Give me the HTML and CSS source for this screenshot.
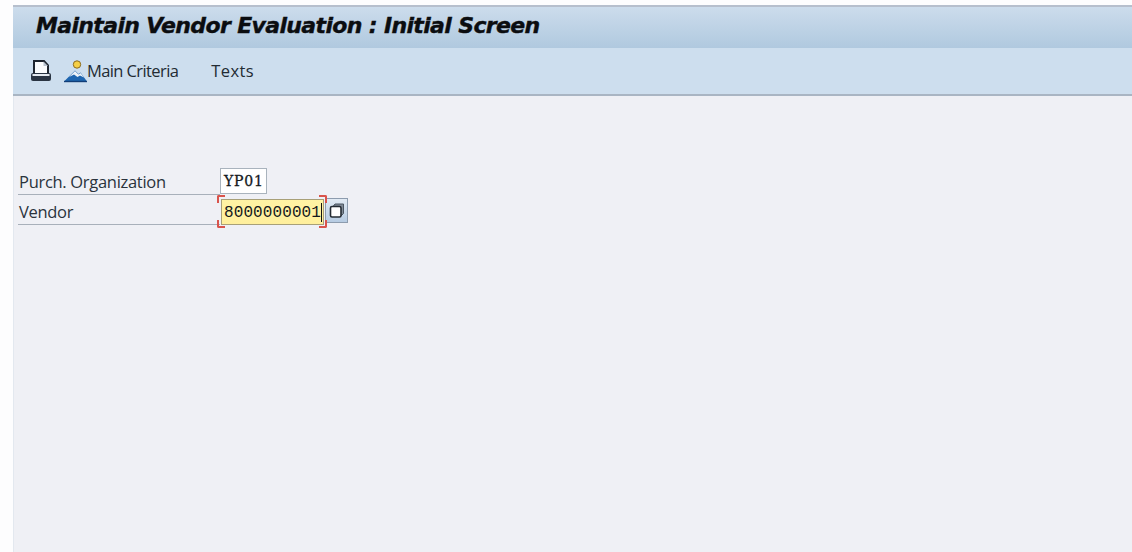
FILE: index.html
```html
<!DOCTYPE html>
<html lang="en">
<head>
<meta charset="utf-8">
<title>Maintain Vendor Evaluation : Initial Screen</title>
<link rel="stylesheet" href="styles.css">
</head>
<body>
<div class="window">
  <header class="titlebar"><h1 class="title">Maintain Vendor Evaluation : Initial Screen</h1></header>
  <nav class="toolbar">
    <svg class="icon-print" width="22" height="24" viewBox="0 0 22 24" aria-hidden="true">
      <path d="M4 14V2h10l4 4.500V14" fill="#fbfcfd" stroke="#1f2630" stroke-width="2"/>
      <path d="M13.500 2.500v4.500H18z" fill="#b9c4d0"/>
      <path d="M1 16a2 2 0 0 1 2-2h16a2 2 0 0 1 2 2v4a2 2 0 0 1-2 2H3a2 2 0 0 1-2-2z" fill="#2a3442"/>
      <path d="M2.500 15h17v2h-17z" fill="#e4e9ef"/>
    </svg>
    <button class="tool tool-main" type="button">
      <svg class="icon-mountain" width="24" height="24" viewBox="0 0 24 24" aria-hidden="true">
        <circle cx="14" cy="5.500" r="3.700" fill="#f5cf45" stroke="#8a6a20" stroke-width="1"/>
        <path d="M1 22.500 12 11.500l3.500 3.500 2-1.500 6.500 9z" fill="#1f66b0"/>
        <path d="M6 18 12 12l3.500 3.500 2-1.500 3.500 4.500-4-2-2.500 1.500-3.500-2.500z" fill="#eef3f8"/>
        <path d="M1 22.500h23" stroke="#123e78" stroke-width="1.400"/>
      </svg>
      <span class="tool-label">Main Criteria</span>
    </button>
    <button class="tool tool-texts" type="button"><span class="tool-label">Texts</span></button>
  </nav>
  <main class="content">
    <form class="form">
      <div class="row row-org">
        <label class="label">Purch. Organization</label>
        <span class="field field-plain">YP01</span>
      </div>
      <div class="row row-vendor">
        <label class="label">Vendor</label>
        <span class="field field-active">8000000001<i class="caret"></i>
          <i class="corner tl"></i><i class="corner tr"></i><i class="corner bl"></i><i class="corner br"></i>
        </span>
        <button class="search" type="button" aria-label="Multiple selection">
          <svg width="18" height="18" viewBox="0 0 18 18" aria-hidden="true">
            <path d="M5 4.500 7 2h8.500v9.500L13 14" fill="#7f8a96" stroke="#4a5560" stroke-width="1"/>
            <rect x="2.500" y="4.500" width="10.500" height="10.500" rx="1.500" fill="#fff" stroke="#252c34" stroke-width="1.600"/>
          </svg>
        </button>
      </div>
    </form>
  </main>
</div>
</body>
</html>
```
FILE: styles.css
```css
* { box-sizing: border-box; }
html, body { margin: 0; height: 100%; }
body {
  background: #fdfdfe;
  padding: 5px 0 0 13px;
  overflow: hidden;
  font-family: "Open Sans", "Liberation Sans", sans-serif;
  color: #222b33;
}
.window {
  height: 547px;
  background: #eff0f5;
  display: flex;
  flex-direction: column;
  box-shadow: inset 1px 0 0 #e3e8ef;
}
.titlebar {
  height: 43px;
  flex: none;
  display: flex;
  align-items: center;
  padding: 0 0 4px 23px;
  background: linear-gradient(#ccdcec, #b0c9df);
  border-top: 2px solid #b6bfcd;
}
.title {
  margin: 0;
  font: italic bold 22px "DejaVu Sans", sans-serif;
  letter-spacing: -0.650px;
  -webkit-text-stroke: 0.400px #0b0d10;
  color: #0b0d10;
  white-space: nowrap;
}
.toolbar {
  height: 48px;
  flex: none;
  display: flex;
  align-items: center;
  padding-left: 17px;
  background: #cddeee;
  border-bottom: 2px solid #a9b5c3;
}
.icon-print { flex: none; }
.tool {
  border: 0;
  background: none;
  padding: 0;
  font: 16.500px "Open Sans", sans-serif;
  color: #222b33;
  display: flex;
  align-items: center;
}
.tool-label { margin-bottom: 2px; }
.tool-main { margin-left: 11px; letter-spacing: -0.600px; }
.tool-texts { margin-left: 33px; letter-spacing: 0.400px; }
.content { flex: 1; padding: 72px 0 0 5px; }
.form { display: flex; flex-direction: column; }
.row { display: flex; align-items: flex-end; height: 30px; }
.row-org { height: 27px; }
.label {
  width: 202px;
  height: 100%;
  display: flex;
  align-items: center;
  padding-left: 1px;
  font-size: 16.500px;
  letter-spacing: -0.300px;
  color: #2a333c;
  border-bottom: 1px solid #a8b0ba;
}
.row-vendor .label { padding-top: 3px; }
.field {
  font: 16px "Liberation Mono", monospace;
  color: #14181c;
  display: flex;
  align-items: center;
}
.field-plain {
  width: 47px;
  height: 26px;
  margin-bottom: 1px;
  padding-left: 3px;
  font: 14px "DejaVu Serif", serif;
  letter-spacing: 0.800px;
  -webkit-text-stroke: 0.300px #14181c;
  background: #fff;
  border: 1px solid #a9b3bd;
}
.field-active {
  position: relative;
  width: 103px;
  height: 26px;
  margin-left: 1px;
  padding: 1px 0 0 2px;
  background: linear-gradient(#fff3a4, #ffef9c);
  border: 1px solid #a8a078;
  letter-spacing: 0.100px;
}
.caret { width: 1px; height: 19px; background: #111; flex: none; }
.corner { position: absolute; width: 8px; height: 8px; border: 0 solid #d9544c; }
.tl { top: -5px; left: -5px; border-width: 2px 0 0 2px; border-radius: 2px 0 0 0; }
.tr { top: -5px; right: -4px; border-width: 2px 2px 0 0; border-radius: 0 2px 0 0; }
.bl { bottom: -4px; left: -5px; border-width: 0 0 2px 2px; border-radius: 0 0 0 2px; }
.br { bottom: -4px; right: -4px; border-width: 0 2px 2px 0; border-radius: 0 0 2px 0; }
.search {
  width: 23px;
  height: 25px;
  padding: 0;
  margin: 0 0 2px 1px;
  display: flex;
  align-items: center;
  justify-content: center;
  background: linear-gradient(#e2ebf4, #b6cbe2);
  border: 1px solid #8d9cae;
}
```
